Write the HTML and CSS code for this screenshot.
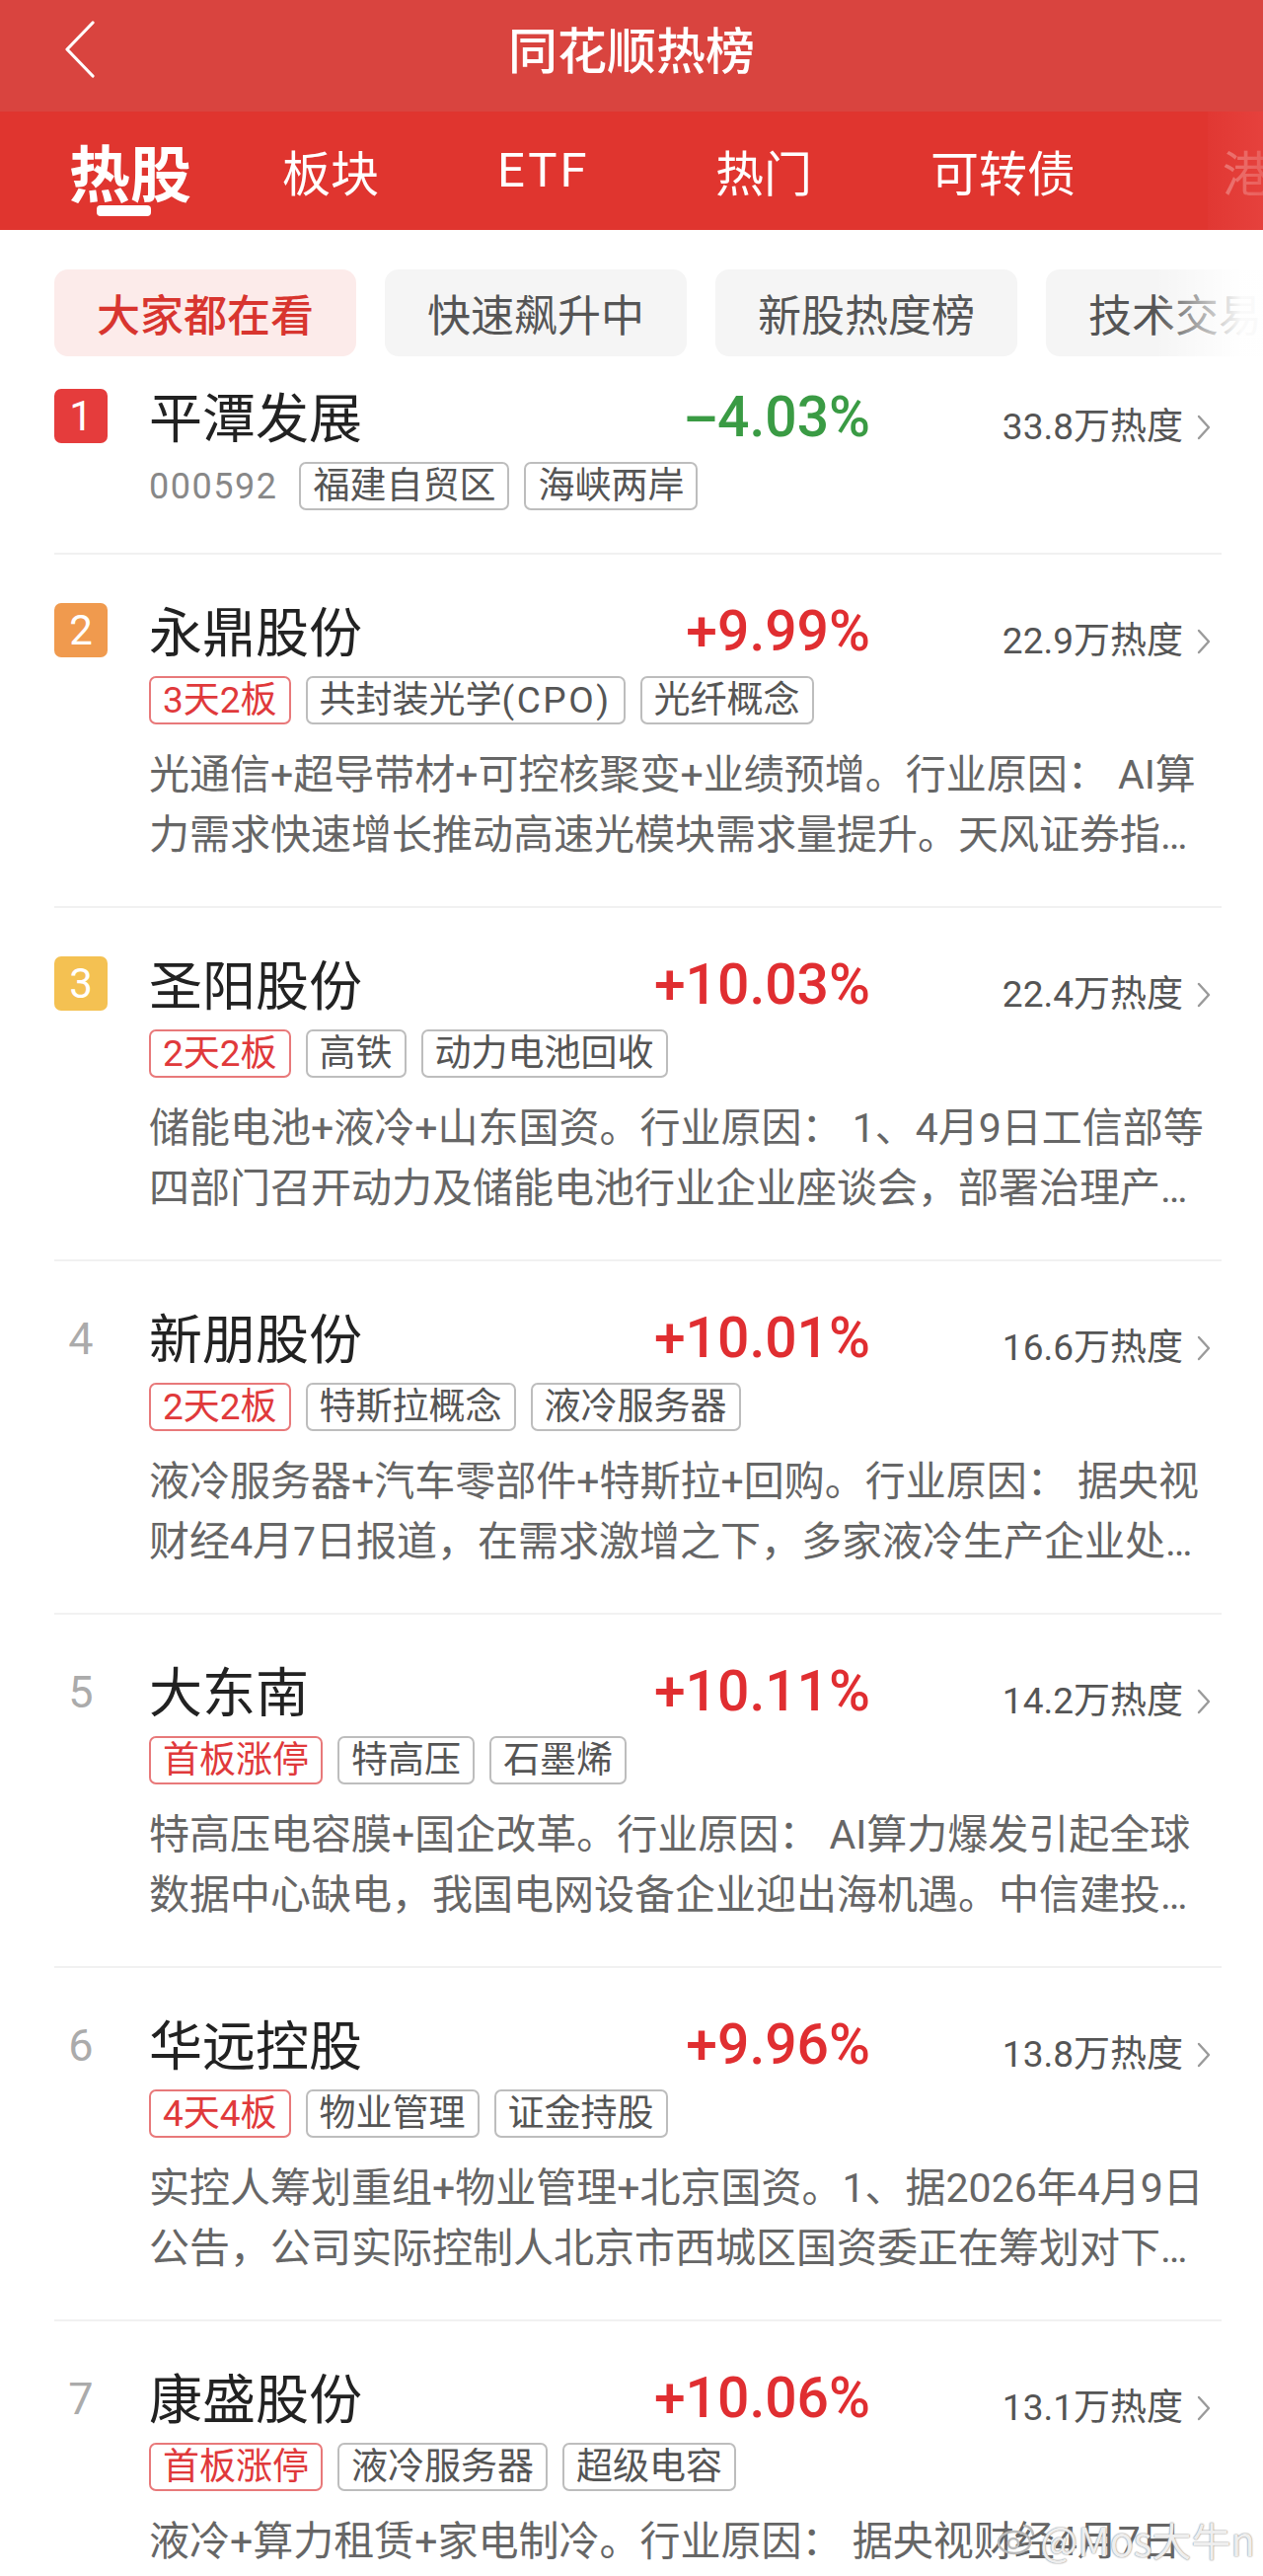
FILE: index.html
```html
<!DOCTYPE html>
<html lang="zh-CN">
<head>
<meta charset="utf-8">
<title>同花顺热榜</title>
<link rel="stylesheet" href="styles.css">
</head>
<body>
<header class="titlebar">
  <div class="back-wrap">
    <svg class="back" viewBox="0 0 34 58" width="34" height="58"><polyline points="30,2 4,29 30,56" fill="none" stroke="#fff" stroke-width="3.2" stroke-linecap="round" stroke-linejoin="round"/></svg>
  </div>
  <h1 class="title">同花顺热榜</h1>
  <div></div>
</header>
<nav class="tabs">
  <span class="tab active">热股</span>
  <span class="tab">板块</span>
  <span class="tab etf">ETF</span>
  <span class="tab">热门</span>
  <span class="tab">可转债</span>
  <span class="tab">港股</span>
</nav>
<div class="chips">
  <span class="chip on">大家都在看</span>
  <span class="chip">快速飙升中</span>
  <span class="chip">新股热度榜</span>
  <span class="chip">技术交易派</span>
</div>
<main class="list">
  <section class="row first">
    <div class="head">
      <span class="rank b1">1</span>
      <span class="name">平潭发展</span>
      <span class="pct down"><span class="minus">-</span>4.03%</span>
      <span class="heat">33.8万热度<svg class="chev" viewBox="0 0 14 26" width="14" height="26"><polyline points="2,2 12,13 2,24" fill="none" stroke="#9a9a9a" stroke-width="2.4" stroke-linecap="round" stroke-linejoin="round"/></svg></span>
    </div>
    <div class="tags"><span class="code">000592</span><span class="tag">福建自贸区</span><span class="tag">海峡两岸</span></div>
  </section>

  <section class="row">
    <div class="head">
      <span class="rank b2">2</span>
      <span class="name">永鼎股份</span>
      <span class="pct up">+9.99%</span>
      <span class="heat">22.9万热度<svg class="chev" viewBox="0 0 14 26" width="14" height="26"><polyline points="2,2 12,13 2,24" fill="none" stroke="#9a9a9a" stroke-width="2.4" stroke-linecap="round" stroke-linejoin="round"/></svg></span>
    </div>
    <div class="tags"><span class="tag red">3天2板</span><span class="tag">共封装光学<span class="latin">(CPO)</span></span><span class="tag">光纤概念</span></div>
    <div class="desc"><p>光通信+超导带材+可控核聚变+业绩预增。行业原因： AI算</p><p>力需求快速增长推动高速光模块需求量提升。天风证券指…</p></div>
  </section>

  <section class="row">
    <div class="head">
      <span class="rank b3">3</span>
      <span class="name">圣阳股份</span>
      <span class="pct up">+10.03%</span>
      <span class="heat">22.4万热度<svg class="chev" viewBox="0 0 14 26" width="14" height="26"><polyline points="2,2 12,13 2,24" fill="none" stroke="#9a9a9a" stroke-width="2.4" stroke-linecap="round" stroke-linejoin="round"/></svg></span>
    </div>
    <div class="tags"><span class="tag red">2天2板</span><span class="tag">高铁</span><span class="tag">动力电池回收</span></div>
    <div class="desc"><p>储能电池+液冷+山东国资。行业原因： 1、4月9日工信部等</p><p>四部门召开动力及储能电池行业企业座谈会，部署治理产…</p></div>
  </section>

  <section class="row">
    <div class="head">
      <span class="rank plain">4</span>
      <span class="name">新朋股份</span>
      <span class="pct up">+10.01%</span>
      <span class="heat">16.6万热度<svg class="chev" viewBox="0 0 14 26" width="14" height="26"><polyline points="2,2 12,13 2,24" fill="none" stroke="#9a9a9a" stroke-width="2.4" stroke-linecap="round" stroke-linejoin="round"/></svg></span>
    </div>
    <div class="tags"><span class="tag red">2天2板</span><span class="tag">特斯拉概念</span><span class="tag">液冷服务器</span></div>
    <div class="desc"><p>液冷服务器+汽车零部件+特斯拉+回购。行业原因： 据央视</p><p>财经4月7日报道，在需求激增之下，多家液冷生产企业处…</p></div>
  </section>

  <section class="row">
    <div class="head">
      <span class="rank plain">5</span>
      <span class="name">大东南</span>
      <span class="pct up">+10.11%</span>
      <span class="heat">14.2万热度<svg class="chev" viewBox="0 0 14 26" width="14" height="26"><polyline points="2,2 12,13 2,24" fill="none" stroke="#9a9a9a" stroke-width="2.4" stroke-linecap="round" stroke-linejoin="round"/></svg></span>
    </div>
    <div class="tags"><span class="tag red">首板涨停</span><span class="tag">特高压</span><span class="tag">石墨烯</span></div>
    <div class="desc"><p>特高压电容膜+国企改革。行业原因： AI算力爆发引起全球</p><p>数据中心缺电，我国电网设备企业迎出海机遇。中信建投…</p></div>
  </section>

  <section class="row">
    <div class="head">
      <span class="rank plain">6</span>
      <span class="name">华远控股</span>
      <span class="pct up">+9.96%</span>
      <span class="heat">13.8万热度<svg class="chev" viewBox="0 0 14 26" width="14" height="26"><polyline points="2,2 12,13 2,24" fill="none" stroke="#9a9a9a" stroke-width="2.4" stroke-linecap="round" stroke-linejoin="round"/></svg></span>
    </div>
    <div class="tags"><span class="tag red">4天4板</span><span class="tag">物业管理</span><span class="tag">证金持股</span></div>
    <div class="desc"><p>实控人筹划重组+物业管理+北京国资。1、据2026年4月9日</p><p>公告，公司实际控制人北京市西城区国资委正在筹划对下…</p></div>
  </section>

  <section class="row">
    <div class="head">
      <span class="rank plain">7</span>
      <span class="name">康盛股份</span>
      <span class="pct up">+10.06%</span>
      <span class="heat">13.1万热度<svg class="chev" viewBox="0 0 14 26" width="14" height="26"><polyline points="2,2 12,13 2,24" fill="none" stroke="#9a9a9a" stroke-width="2.4" stroke-linecap="round" stroke-linejoin="round"/></svg></span>
    </div>
    <div class="tags"><span class="tag red">首板涨停</span><span class="tag">液冷服务器</span><span class="tag">超级电容</span></div>
    <div class="desc"><p>液冷+算力租赁+家电制冷。行业原因： 据央视财经4月7日</p></div>
  </section>
</main>
<div class="watermark">
  <svg class="wb" viewBox="0 0 40 34" width="40" height="34"><ellipse cx="18" cy="20" rx="16" ry="11" fill="none" stroke="#bbb" stroke-width="2.5"/><circle cx="17" cy="21" r="5" fill="none" stroke="#bbb" stroke-width="2.5"/><path d="M28 3 q8 1 9 9" fill="none" stroke="#bbb" stroke-width="2.5" stroke-linecap="round"/></svg>
  <span>@Mos大牛n</span>
</div>
</body>
</html>
```

FILE: styles.css
```css
* { box-sizing: border-box; margin: 0; padding: 0; }
html, body { width: 1280px; height: 2610px; overflow: hidden; background: #fff; }
body {
  font-family: Roboto, "Noto Sans CJK SC", sans-serif;
  color: #222;
  position: relative;
}

/* title bar */
.titlebar {
  height: 113px;
  background: #d9443f;
  display: grid;
  grid-template-columns: 1fr auto 1fr;
  align-items: center;
  padding-bottom: 14px;
}
.back-wrap { padding-left: 64px; display: flex; align-items: center; }
.back { display: block; }
.title {
  font-family: "Noto Sans CJK SC", sans-serif;
  font-size: 50px;
  font-weight: 500;
  color: #fff;
  line-height: 60px;
  margin-top: -4px;
}

/* tabs */
.tabs {
  height: 120px;
  background: #e0352f;
  display: flex;
  align-items: center;
  padding-left: 70px;
  position: relative;
  overflow: hidden;
  white-space: nowrap;
}
.tabs::after {
  content: "";
  position: absolute;
  right: 0; top: 0; bottom: 0;
  width: 56px;
  background: linear-gradient(to right, rgba(226,58,54,0.55), rgba(231,68,64,0.8));
}
.tab {
  font-family: "Noto Sans CJK SC", sans-serif;
  font-size: 49px;
  color: #fff;
  line-height: 60px;
  position: relative;
  flex: none;
}
.tab:nth-child(2) { margin-left: 92px; }
.tab:nth-child(3) { margin-left: 120px; }
.tab:nth-child(4) { margin-left: 135px; }
.tab:nth-child(5) { margin-left: 120px; }
.tab:nth-child(6) { margin-left: 149px; color: rgba(255,255,255,0.75); }
.tab.active {
  font-size: 62px;
  font-weight: 700;
}
.tab.active::after {
  content: "";
  position: absolute;
  left: 50%;
  bottom: -16px;
  width: 55px;
  height: 11px;
  margin-left: -34px;
  background: #fff;
  border-radius: 4px;
}
.tab.etf { font-family: Roboto, sans-serif; letter-spacing: 3px; width: 86px; }

/* chips */
.chips {
  margin-top: 40px;
  height: 88px;
  display: flex;
  gap: 29px;
  padding-left: 55px;
  overflow: hidden;
  position: relative;
  white-space: nowrap;
}
.chips::after {
  content: "";
  position: absolute;
  right: 0; top: 0; bottom: 0;
  width: 110px;
  background: linear-gradient(to right, rgba(255,255,255,0), rgba(255,255,255,0.97) 80%);
}
.chip {
  flex: 0 0 306px;
  height: 88px;
  border-radius: 14px;
  background: #f5f5f5;
  color: #555;
  font-family: "Noto Sans CJK SC", sans-serif;
  font-size: 44px;
  display: flex;
  align-items: center;
  justify-content: center;
}
.chip.on { background: #fcebea; color: #d8352f; font-weight: 500; }

/* list */
.list { padding: 0 42px 0 55px; }
.row {
  padding: 44px 0 41px;
  border-bottom: 2px solid #f1f1f1;
}
.row.first { padding: 28px 0 43px; }
.head {
  height: 64px;
  display: flex;
  align-items: center;
}
.rank {
  flex: 0 0 54px;
  height: 55px;
  border-radius: 7px;
  color: #fff;
  font-size: 42px;
  line-height: 55px;
  text-align: center;
  margin-right: 42px;
}
.b1 { background: #e53c3c; }
.b2 { background: #f09a4e; }
.b3 { background: #f4c152; }
.rank.plain { color: #ababab; font-size: 45px; background: none; margin-top: 4px; }
.name {
  flex: 1;
  font-family: "Noto Sans CJK SC", sans-serif;
  font-size: 54px;
  line-height: 64px;
  color: #222;
}
.pct {
  font-size: 57px;
  font-weight: 500;
  line-height: 64px;
  margin-top: 4px;
}
.up { color: #e02e31; }
.down { color: #3a9b44; }
.minus { display: inline-block; transform: scaleX(1.9); margin: 0 7px 0 3px; }
.heat {
  flex: 0 0 356px;
  display: flex;
  align-items: center;
  justify-content: flex-end;
  padding-right: 11px;
  font-size: 37px;
  color: #555;
  margin-top: 24px;
  line-height: 40px;
}
.chev { margin-left: 14px; display: block; }

.tags {
  margin-top: 15px;
  margin-left: 96px;
  display: flex;
  align-items: center;
  gap: 15px;
  height: 49px;
}
.code { font-size: 36px; color: #888; letter-spacing: 1.5px; margin-right: 7px; }
.tag {
  height: 49px;
  border: 2px solid #bdbdbd;
  border-radius: 7px;
  padding: 0 12px;
  font-size: 37px;
  color: #555;
  line-height: 45px;
  white-space: nowrap;
}
.tag .latin { letter-spacing: 2.5px; }
.tag.red { border-color: #e8797a; color: #e0393b; }

.desc {
  margin-top: 21px;
  margin-left: 96px;
  font-size: 41px;
  line-height: 61px;
  color: #666;
}
.desc p { white-space: nowrap; overflow: hidden; }

/* watermark */
.watermark {
  position: absolute;
  right: 8px;
  bottom: 8px;
  display: flex;
  align-items: center;
  gap: 4px;
  font-family: "Noto Sans CJK SC", sans-serif;
  font-size: 40px;
  color: rgba(255,255,255,0.85);
  text-shadow: 0 0 2px #999, 0 0 1px #888;
}
.wb { display: block; }
```
